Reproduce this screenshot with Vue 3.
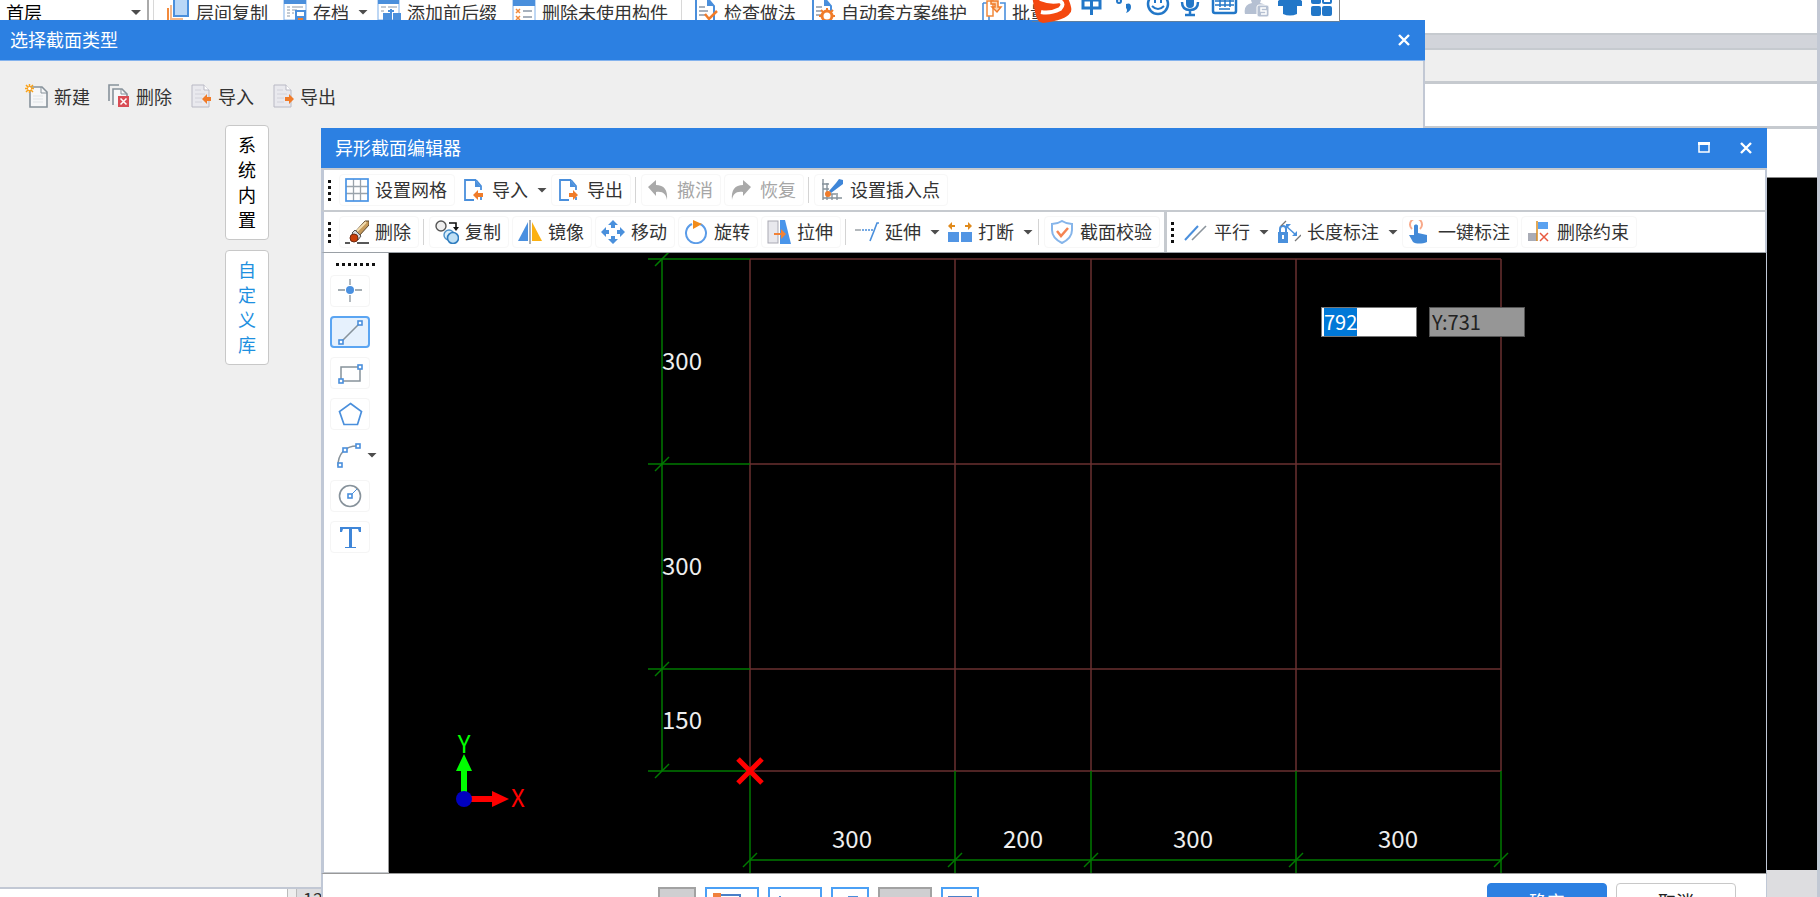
<script setup>
import { onMounted, ref } from 'vue'

const doc = (accent) =>
  `<path d="M3 1h12l5 5v17H3z" fill="#e9e9ee" stroke="#b9b9c4"/><path d="M15 1v5h5" fill="#fff" stroke="#b9b9c4"/><path d="M6 6h6M6 10h10M6 14h7M6 18h7" stroke="#d2d2da"/>${accent}`
const sheet = (accent) =>
  `<path d="M14 2H3v20h9M14 2l5 6v4M19 19v3" fill="none" stroke="#4a8fdc" stroke-width="1.800"/><path d="M13 2v7h6z" fill="#4a8fdc"/>${accent}`
const node = (x, y) => `<rect x="${x - 2}" y="${y - 2}" width="4" height="4" fill="#fff" stroke="#4a8fdc" stroke-width="1.6"/>`

const icons = {
  layers: '<path d="M2 8v14h13" fill="none" stroke="#f28a3c" stroke-width="2"/><path d="M5 5v14h12" fill="none" stroke="#f6b98a" stroke-width="2"/><rect x="8" y="-2" width="14" height="18" fill="#b9d7f7" stroke="#4a8fdc" stroke-width="2"/>',
  archive: '<rect x="1" y="-2" width="22" height="22" fill="#fff" stroke="#7fb0ea"/><rect x="1" y="-2" width="22" height="6" fill="#4a8fdc"/><path d="M4 7h3M9 7h11M4 10h3M9 10h5M4 13h3M9 13h2M4 16h3" stroke="#8a98a8"/><path d="M12 10h11v12H12z" fill="#4a8fdc"/><path d="M14 12h7v4h-7z" fill="#fff"/><path d="M15 18h5v4h-5z" fill="#f07c2a"/>',
  affix: '<rect x="1" y="-2" width="21" height="22" fill="#fff" stroke="#7fb0ea"/><rect x="1" y="-2" width="21" height="6" fill="#4a8fdc"/><path d="M4 7h5M11 7h9M4 11h3" stroke="#8a98a8"/><path d="M6 13h7v9H6zM16 13h8v9h-8z" fill="#4a8fdc"/><path d="M14 9v12M11 11h6" stroke="#4a8fdc" stroke-width="2"/>',
  unused: '<rect x="1" y="-2" width="22" height="25" fill="#fff" stroke="#7fb0ea"/><rect x="1" y="-2" width="22" height="8" fill="#4a8fdc"/><path d="M4 9l4 4m0-4l-4 4M4 16l4 4m0-4l-4 4" stroke="#f28a3c" stroke-width="1.5"/><path d="M11 11h9M11 17h9" stroke="#8a98a8" stroke-width="1.5"/>',
  check: '<path d="M2-1h12l6 7v16H2z" fill="#fff" stroke="#4a8fdc" stroke-width="2"/><path d="M13-1v7h7z" fill="#4a8fdc"/><path d="M5 7h6M5 11h9M5 15h7" stroke="#8a98a8" stroke-width="1.5"/><path d="M11 14l4 5 8-8" fill="none" stroke="#f07c2a" stroke-width="2.5"/>',
  scheme: '<path d="M2-1h12l6 7v16H2z" fill="#fff" stroke="#4a8fdc" stroke-width="2"/><path d="M13-1v7h7z" fill="#4a8fdc"/><path d="M5 7h6M5 11h5M5 15h5" stroke="#8a98a8" stroke-width="1.5"/><circle cx="16" cy="16" r="5" fill="#fff" stroke="#f07c2a" stroke-width="3"/><path d="M16 8v3M8 16h3M21 16h3M10 10l3 3M22 10l-3 3" stroke="#f07c2a" stroke-width="2"/>',
  batch: '<path d="M1 3h6v18M1 3v19h22V3h-5" fill="none" stroke="#4a8fdc" stroke-width="1.6"/><path d="M5 1h6v15H5z" fill="#fff" stroke="#f28a3c" stroke-width="1.5"/><path d="M9 1h7v6h3l-4 5-5-5h3V4H9z" fill="#fcd3ae" stroke="#f07c2a" stroke-width="1.5"/>',
  create: '<path d="M5 3h12l5 5v15H5z" fill="#f6f7f8" stroke="#87929b" stroke-width="1.6"/><path d="M16 3v6h6" fill="none" stroke="#87929b"/><path d="M8 12h10M8 15h10M8 18h10" stroke="#dfe3e6"/><path d="M1 1l7 7M8 1L1 8M4.5 0v9M0 4.500h9" stroke="#f9a21b" stroke-width="1.500"/><circle cx="4.500" cy="4.500" r="1.500" fill="#fff"/>',
  dialogDelete: '<path d="M2 17V1h10" fill="none" stroke="#87929b" stroke-width="1.600"/><path d="M6 21V5h9l5 5v6" fill="#f6f7f8" stroke="#87929b" stroke-width="1.600"/><path d="M14 5v5h6" fill="none" stroke="#87929b"/><rect x="11" y="12" width="11" height="11" fill="#d94d55"/><path d="M13.500 14.500l6 6m0-6l-6 6" stroke="#fff" stroke-width="1.500"/>',
  dialogImport: doc('<path d="M13 15l5-5v3h4v4h-4v3z" fill="#f07c2a"/>'),
  dialogExport: doc('<path d="M23 15l-5-5v3h-4v4h4v3z" fill="#f07c2a"/>'),
  grid: '<rect x="1" y="1" width="22" height="22" fill="#fff"/><path d="M8.500 1v22M15.500 1v22M1 8.500h22M1 15.500h22" stroke="#9aa3ab" stroke-width="1.300"/><rect x="1" y="1" width="22" height="22" fill="none" stroke="#4a95e6" stroke-width="1.700"/>',
  import: sheet('<path d="M11 17l5-5v3h5v4h-5v3z" fill="#f07c2a"/>'),
  export: sheet('<path d="M21 17l-5-5v3h-4v4h4v3z" fill="#f07c2a"/>'),
  undo: '<path d="M1 9l8-7v5c8 0 12 5 11 15-1-6-4-9-11-8v4z" fill="#a9a9a9"/>',
  redo: '<path d="M21 9l-8-7v5C5 7 1 12 2 22c1-6 4-9 11-8v4z" fill="#a9a9a9"/>',
  insertion: '<path d="M3 1v21M7 5v17M12 16v6M17 17v5M2 6h7M3 11h6M8 16h10M3 20h19" stroke="#87929b" stroke-width="1.400"/><path d="M9 13l7-8 3-4 4 1v4l-4 3-8 6z" fill="#3f86d8"/><circle cx="8" cy="16" r="3" fill="#f07c2a"/>',
  eraser: '<path d="M10 12L20 1h4v4L14 16z" fill="#c69a5b" stroke="#59452d"/><path d="M12 11l9-9" stroke="#f2dcae" stroke-width="2"/><path d="M7 13l3-3 6 6-3 4z" fill="#d4d8dc" stroke="#555"/><circle cx="9" cy="18" r="4" fill="#c83e08" stroke="#6d2b12"/><path d="M0 23h5M12 23h12" stroke="#222" stroke-width="1.500"/>',
  copy: '<circle cx="6" cy="6" r="5" fill="#eee" stroke="#555" stroke-width="1.400"/><path d="M14 3h7v5" fill="none" stroke="#111" stroke-width="1.600"/><path d="M18 7h6l-3 4z" fill="#111"/><circle cx="14" cy="15" r="5" fill="#d8eefb" stroke="#4d92c9" stroke-width="1.400"/><circle cx="18" cy="18" r="5.500" fill="#bfe0f5" stroke="#2f7dbf" stroke-width="1.600"/>',
  mirror: '<path d="M10 2v19H0z" fill="#4a90e0"/><path d="M14 2v19h10z" fill="#fcb112"/><path d="M12 0v24" stroke="#8e9399" stroke-width="1.500"/>',
  move: '<path d="M12 0l5 5h-3v3h-4V5H7zM12 24l-5-5h3v-3h4v3h3zM0 12l5-5v3h3v4H5v3zM24 12l-5 5v-3h-3v-4h3V7z" fill="#4a90dc"/>',
  rotate: '<path d="M8 4a10 10 0 1 0 8 0" fill="none" stroke="#5b9ce8" stroke-width="2"/><path d="M9 0l9 4-9 5z" fill="#f28c1b"/>',
  stretch: '<rect x="1" y="1" width="10" height="22" fill="#e8e8ed" stroke="#a9a9b3"/><path d="M13 0h5l6 24H13z" fill="#4a95ea"/><path d="M7 13h7V9l5 5-5 5v-4H7z" fill="#f28236"/>',
  extend: '<path d="M0 10h6" stroke="#9aa0a6" stroke-width="1.500"/><path d="M7 10h11" stroke="#4a8fdc" stroke-width="1.500" stroke-dasharray="2 1"/><path d="M24 3h-2l-3 8-4 10" fill="none" stroke="#4a8fdc" stroke-width="1.600"/>',
  break: '<path d="M0 12h11v10H0zM13 12h11v10H13z" fill="#5195e4"/><path d="M0 6l4-4v3h3v2H4v3zM24 6l-4-4v3h-3v2h3v3z" fill="#e08a1c"/>',
  verify: '<path d="M12 1c3 2 6 3 10 3v6c0 6-4 10-10 13C6 20 2 16 2 10V4c4 0 7-1 10-3z" fill="#fff" stroke="#86b5ea" stroke-width="2"/><path d="M7 11l4 5 7-8" fill="none" stroke="#f58452" stroke-width="2.500"/>',
  parallel: '<path d="M1 20L14 6" stroke="#4a8fdc" stroke-width="2"/><path d="M8 20L22 6" stroke="#8b949c" stroke-width="1.600"/>',
  length: '<rect x="1" y="12" width="10" height="11" fill="#4a90dc"/><path d="M3 12V9a3 3 0 0 1 6 0v3" fill="none" stroke="#4a90dc" stroke-width="2"/><path d="M6 15v4" stroke="#fff" stroke-width="2"/><path d="M4 6l5-5M18 21l6-6" stroke="#777" stroke-width="1.300"/><path d="M9 6l10 9" stroke="#4a90dc" stroke-width="1.500"/><path d="M9 4h5l-5 5zM20 16v-5l-5 5z" fill="#4a90dc"/>',
  touch: '<path d="M4 9a6 6 0 1 1 8 0" fill="none" stroke="#f8a98a" stroke-width="2"/><path d="M6 6c0-2 4-2 4 0v7l9 2v7c-5 2-11 2-14 0l-4-7h5z" fill="#438ad8"/>',
  unconstrain: '<path d="M11 2h10v7H11z" fill="#5ba2f0"/><path d="M1 13h9v8H1z" fill="#a9acb6"/><path d="M10 1v20" stroke="#d98c1f" stroke-width="1.500"/><path d="M13 13l8 8m0-8l-8 8" stroke="#e8593f" stroke-width="1.500"/>',
  point: '<path d="M12 0v6M12 16v7M0 11h7M17 11h7" stroke="#87929b" stroke-width="1.300"/><circle cx="12" cy="11" r="4" fill="#4a90e0"/>',
  line: '<path d="M4 21L22 3" stroke="#87929b" stroke-width="1.600"/>' + node(3, 22) + node(22, 3),
  rect: '<rect x="3" y="6" width="19" height="14" fill="none" stroke="#87929b" stroke-width="1.500"/>' + node(3, 20) + node(22, 6),
  pentagon: '<path d="M12.500 1.500l11 8-4 13h-13.500l-4.500-13z" fill="none" stroke="#4a8fdc" stroke-width="1.700"/>',
  arc: '<path d="M1 23C1 11 8 3 20 3" fill="none" stroke="#87929b" stroke-width="1.500"/>' + node(3, 22) + node(8, 7) + node(21, 3),
  circle: '<circle cx="12" cy="12" r="10.500" fill="none" stroke="#87929b" stroke-width="1.600"/><path d="M12 12l7-7" stroke="#4a90dc"/>' + node(12, 12),
  textTool: '<path d="M2 2h21v5h-2l-1-3h-6v18h4v1H7v-1h4V4H5L4 7H2z" fill="#3f86d8"/>',
}

const mainTools = [
  { icon: 'layers', label: '层间复制' },
  { icon: 'archive', label: '存档', menu: true },
  { icon: 'affix', label: '添加前后缀' },
  { icon: 'unused', label: '删除未使用构件' },
  { sep: true },
  { icon: 'check', label: '检查做法' },
  { icon: 'scheme', label: '自动套方案维护' },
  { icon: 'batch', label: '批量' },
]
const sectionTools = [
  { icon: 'create', label: '新建' },
  { icon: 'dialogDelete', label: '删除' },
  { icon: 'dialogImport', label: '导入' },
  { icon: 'dialogExport', label: '导出' },
]
const rows = [
  [[
    { icon: 'grid', label: '设置网格' },
    { icon: 'import', label: '导入', menu: true },
    { icon: 'export', label: '导出' },
    { sep: true },
    { icon: 'undo', label: '撤消', off: true },
    { icon: 'redo', label: '恢复', off: true },
    { sep: true },
    { icon: 'insertion', label: '设置插入点' },
  ]],
  [[
    { icon: 'eraser', label: '删除' },
    { sep: true },
    { icon: 'copy', label: '复制' },
    { icon: 'mirror', label: '镜像' },
    { icon: 'move', label: '移动' },
    { icon: 'rotate', label: '旋转' },
    { icon: 'stretch', label: '拉伸' },
    { sep: true },
    { icon: 'extend', label: '延伸', menu: true },
    { icon: 'break', label: '打断', menu: true },
    { sep: true },
    { icon: 'verify', label: '截面校验' },
  ], [
    { icon: 'parallel', label: '平行', menu: true },
    { icon: 'length', label: '长度标注', menu: true },
    { icon: 'touch', label: '一键标注' },
    { icon: 'unconstrain', label: '删除约束' },
  ]],
]
const palette = [
  { icon: 'point', label: '点' },
  { icon: 'line', label: '直线' },
  { icon: 'rect', label: '矩形' },
  { icon: 'pentagon', label: '多边形' },
  { icon: 'arc', label: '弧线', menu: true },
  { icon: 'circle', label: '圆' },
  { icon: 'textTool', label: '文字' },
]
const active = ref('line')

const xs = [361, 566, 702, 907, 1112]
const ys = [6, 211, 416, 518]
const xDims = [
  { at: 463, value: 300 },
  { at: 634, value: 200 },
  { at: 804, value: 300 },
  { at: 1009, value: 300 },
]
const yDims = [
  { at: 117, value: 300 },
  { at: 322, value: 300 },
  { at: 476, value: 150 },
]

const xField = ref('792')
const yField = ref('Y:731')
const xInput = ref(null)
onMounted(() => {
  xInput.value.focus()
  xInput.value.select()
})
</script>

<template>
  <div class="desktop">
    <main class="app">
      <header class="app-tools">
        <label class="floor">
          <select aria-label="楼层"><option>首层</option></select>
          <i class="caret"></i>
        </label>
        <i class="app-sep first"></i>
        <template v-for="(t, i) in mainTools" :key="i">
          <i v-if="t.sep" class="app-sep"></i>
          <button v-else class="app-tool" type="button">
            <svg width="24" height="24" v-html="icons[t.icon]"></svg>
            <span>{{ t.label }}</span>
            <i v-if="t.menu" class="caret"></i>
          </button>
        </template>
      </header>
      <div class="strip mid"></div>
      <div class="strip pale"></div>
      <div class="strip blank"></div>
      <div class="strip blank tall"></div>
      <div class="model"></div>
      <footer class="app-status">
        <div class="status-list"></div>
        <i class="status-split"></i>
        <span>12</span>
      </footer>
    </main>

    <section class="window section-window">
      <header class="titlebar">
        <h1>选择截面类型</h1>
        <button type="button" aria-label="关闭">
          <svg width="12" height="12"><path d="M1 1l10 10M11 1L1 11" stroke="#fff" stroke-width="2.400" /></svg>
        </button>
      </header>
      <div class="section-tools">
        <button v-for="t in sectionTools" :key="t.icon" type="button">
          <svg width="24" height="24" v-html="icons[t.icon]"></svg>
          <span>{{ t.label }}</span>
        </button>
      </div>
      <nav class="library">
        <button type="button">系统内置</button>
        <button type="button" class="current">自定义库</button>
      </nav>
    </section>

    <section class="window editor">
      <header class="titlebar">
        <h1>异形截面编辑器</h1>
        <button type="button" aria-label="最大化">
          <svg width="12" height="12"><path d="M1 1v9h10V1" fill="none" stroke="#fff" stroke-width="1.500" /><path d="M0 1.500h12" stroke="#fff" stroke-width="3" /></svg>
        </button>
        <button type="button" aria-label="关闭">
          <svg width="12" height="12"><path d="M1 1l10 10M11 1L1 11" stroke="#fff" stroke-width="2.400" /></svg>
        </button>
      </header>

      <div v-for="(row, r) in rows" :key="r" class="tool-row">
        <div v-for="(group, g) in row" :key="g" class="tool-group">
          <i class="grip"></i>
          <template v-for="(t, i) in group" :key="i">
            <i v-if="t.sep" class="sep"></i>
            <button v-else type="button" class="tool" :class="{ menu: t.menu }" :disabled="t.off">
              <svg width="24" height="24" v-html="icons[t.icon]"></svg>
              <span>{{ t.label }}</span>
              <i v-if="t.menu" class="caret"></i>
            </button>
          </template>
        </div>
      </div>

      <div class="work">
        <aside class="palette">
          <i class="grip flat"></i>
          <button
            v-for="p in palette"
            :key="p.icon"
            type="button"
            :aria-label="p.label"
            :class="{ active: active === p.icon, menu: p.menu }"
            @click="active = p.icon"
          >
            <svg width="25" height="25" v-html="icons[p.icon]"></svg>
            <i v-if="p.menu" class="caret"></i>
          </button>
        </aside>
        <div class="canvas">
          <svg class="drawing" width="100%" height="100%">
            <g stroke="#6a3030" stroke-width="1.500">
              <line v-for="x in xs" :key="'x' + x" :x1="x" :x2="x" y1="6" y2="518" />
              <line v-for="y in ys" :key="'y' + y" x1="361" x2="1112" :y1="y" :y2="y" />
            </g>
            <g stroke="#007a00" stroke-width="1.500">
              <line x1="273" x2="273" y1="6" y2="518" />
              <line v-for="y in ys" :key="'e' + y" x1="259" x2="361" :y1="y" :y2="y" />
              <line v-for="y in ys" :key="'t' + y" x1="266" x2="280" :y1="y + 7" :y2="y - 7" />
              <line x1="361" x2="1112" y1="607" y2="607" />
              <line v-for="x in xs" :key="'e' + x" :x1="x" :x2="x" y1="518" y2="621" />
              <line v-for="x in xs" :key="'t' + x" :x1="x - 7" :x2="x + 7" y1="614" y2="600" />
            </g>
            <g class="dims">
              <text v-for="d in yDims" :key="d.at" x="273" :y="d.at">{{ d.value }}</text>
              <text v-for="d in xDims" :key="d.at" class="centered" :x="d.at" y="595">{{ d.value }}</text>
            </g>
            <path d="M349 506l24 24M373 506l-24 24" stroke="#f00" stroke-width="5" />
            <path d="M72 540V518h-5l8-17 8 17h-5v22z" fill="#0f0" />
            <path d="M82 543h21v-5l17 8-17 8v-5H82z" fill="#f00" />
            <circle cx="75" cy="546" r="8" fill="#0000c0" />
            <text class="axis y" x="75" y="500">Y</text>
            <text class="axis x" x="129" y="554">X</text>
          </svg>
          <div class="coords">
            <input ref="xInput" v-model="xField" type="text" aria-label="X" />
            <input v-model="yField" type="text" aria-label="Y" class="idle" />
          </div>
        </div>
      </div>

      <footer class="editor-foot">
        <div class="modes">
          <button type="button" class="grey" aria-label="光标"><svg width="24" height="24"><path d="M6 8v12l4-4h7z" fill="#555" /></svg></button>
          <button type="button" class="wide" aria-label="对象捕捉"><svg width="40" height="24"><path d="M9 6h19v14" fill="none" stroke="#4a80c8" stroke-width="2" /><path d="M1 4h8v8H1z" fill="#f0803c" /></svg></button>
          <button type="button" class="wide" aria-label="垂点"><svg width="40" height="24"><path d="M5 7v15h22" fill="none" stroke="#4a8fdc" stroke-width="2" /></svg></button>
          <button type="button" aria-label="正交"><svg width="24" height="24"><path d="M10 7h10v8H10zM4 9h6v2H4z" fill="#4a8fdc" /></svg></button>
          <button type="button" class="wide grey" aria-label="锁定"></button>
          <button type="button" aria-label="动态输入"><svg width="24" height="24"><path d="M0 8h24" stroke="#4a80c8" stroke-width="2" /></svg></button>
        </div>
        <div class="decide">
          <button type="button" class="primary">确定</button>
          <button type="button">取消</button>
        </div>
      </footer>
    </section>

    <div class="ime">
      <svg width="310" height="24" viewBox="0 0 310 24">
        <path d="M0-4L34-6Q42 10 38 13 34 20 11 23 5 23 3 12z" fill="#f4480f" />
        <path d="M8-1Q18 3 28 1 33 4 28 9 18 14 9 12" fill="none" stroke="#fff" stroke-width="4" />
        <g fill="none" stroke="#2277c8" stroke-width="3">
          <path d="M51 0h17v8H51zM59.500-6v21" />
          <circle cx="87" cy="1" r="2" stroke-width="2" />
          <circle cx="92" cy="-9" r="2" />
          <circle cx="126" cy="4" r="10" stroke-width="2.500" />
          <path d="M120 6q6 6 12 0M123-1v4M129-1v4" stroke-width="2" />
          <path d="M150 2q0 8 8 8t8-8M158 11v3M153 15h10" stroke-width="2.500" />
          <rect x="181" y="-4" width="23" height="17" rx="2" stroke-width="2.500" />
          <path d="M183 1h19M183 5h19M187 9h11M188-2v9M193-2v9M198-2v9" stroke-width="1.500" />
        </g>
        <rect x="154" y="-6" width="8" height="14" rx="4" fill="#2277c8" />
        <path d="M94 4q5-2 5 3 0 4-5 6 2-3 0-5z" fill="#2277c8" />
        <path d="M213 14Q211 5 220 3q-4-10 4-10t4 10q6 1 7 5v6z" fill="#b5c0d2" />
        <rect x="225" y="5" width="12" height="12" rx="2" fill="#b5c0d2" stroke="#fff" />
        <path d="M234 8h-5v3h5v3h-5" fill="none" stroke="#fff" stroke-width="1.500" />
        <path d="M246 1q5-4 12-4t12 4v5h-5v8q-7 3-14 0V6h-5z" fill="#2277c8" />
        <g fill="#2277c8"><rect x="279" y="-6" width="10" height="10" rx="2" /><rect x="279" y="6" width="10" height="10" rx="2" /><rect x="290" y="6" width="10" height="10" rx="2" /></g>
        <rect x="291" y="-5" width="8" height="8" rx="1" fill="#fff" stroke="#2277c8" stroke-width="2" />
      </svg>
    </div>
  </div>
</template>

<style>
html, body { margin: 0; overflow: hidden; }
</style>

<style scoped>
.desktop { position: relative; height: 100vh; overflow: hidden; color: #333; font: 18px/24px "Noto Sans CJK SC", "Noto Sans", sans-serif; }
.desktop * { box-sizing: border-box; }
button { display: flex; align-items: center; padding: 0; border: 0; background: none; color: inherit; font: inherit; white-space: nowrap; }
svg { flex: none; display: block; }
.caret { flex: none; width: 10px; height: 5px; background: #4d4d4d; clip-path: polygon(0 0, 100% 0, 50% 100%); }

.app { display: flex; flex-direction: column; height: 100%; border-right: 3px solid #c2c8d4; background: #fff; }
.app-tools { display: flex; align-items: flex-start; height: 33px; }
.floor { position: relative; width: 149px; height: 24px; border-right: 2px solid #aaa; }
.floor select { width: 100%; height: 24px; padding: 0 6px; border: 0; appearance: none; background: #fff; color: #000; font: inherit; }
.floor .caret { position: absolute; top: 10px; right: 6px; }
.app-sep { width: 1px; height: 24px; margin: 0 12px 0 -2px; background: #d8d8d8; }
.app-sep.first { margin: 0 12px 0 4px; }
.app-tool { height: 24px; gap: 6px; margin-right: 15px; }
.app-tool .caret { margin-left: 3px; }
.app-tool:has(.caret) { margin-right: 9px; }
.strip { flex: none; height: 45px; border-top: 3px solid #c6cacf; }
.strip.mid { height: 15px; background: #d2d4da; border-top-width: 2px; }
.strip.pale { height: 33px; background: #efefef; border-top-width: 2px; }
.strip.tall { height: 52px; border-bottom: 1px solid #888; }
.model { flex: 1; background: #000; }
.app-status { display: flex; flex: none; height: 27px; padding-top: 18px; background: #dddde0; }
.status-list { width: 288px; background: #fff; border-right: 1px solid #bbb; }
.status-split { width: 9px; border-right: 1px solid #bbb; background: #eee; }
.app-status span { padding-left: 6px; line-height: 20px; }

.window { position: absolute; display: flex; flex-direction: column; }
.titlebar { display: flex; flex: none; align-items: center; height: 40px; padding: 0 14px; background: #2c80e2; color: #fff; }
.titlebar h1 { flex: 1; margin: 0; padding-bottom: 2px; font-size: 18px; font-weight: 400; }
.titlebar button { justify-content: center; width: 14px; height: 24px; margin-left: 28px; }

.section-window { top: 20px; right: 395px; bottom: 8px; left: 0; background: #efefef; border-bottom: 2px solid #c2c8d4; }
.section-window::after { content: ""; position: absolute; top: 41px; right: 0; bottom: 0; width: 2px; background: #c2c8d4; }
.section-window .titlebar { padding-left: 10px; }
.section-tools { display: flex; height: 65px; gap: 17px; padding: 23px 24px 0; border-top: 1px solid #84b3ee; }
.section-tools button { height: 24px; gap: 5px; margin-left: 1px; }
.section-tools button + button { margin-left: 0; }
.library { display: flex; flex-direction: column; align-items: flex-start; gap: 10px; padding-left: 225px; }
.library button { justify-content: center; width: 44px; height: 115px; border: 1px solid #c8c8c8; border-radius: 4px; background: #fff; color: #000; line-height: 25px; white-space: normal; padding: 0 12px 2px; }
.library .current { color: #1e90e0; }

.editor { top: 128px; right: 53px; bottom: -36px; left: 321px; background: #fff; }
.tool-row { display: flex; flex: none; height: 42px; border-top: 2px solid #c6cacf; border-left: 3px solid #c0c8d6; border-right: 2px solid #c0c8d6; }
.tool-group { display: flex; align-items: center; }
.tool-group + .tool-group { margin-left: 1px; border-left: 3px solid #c6cacf; }
.tool-group + .tool-group .grip { margin-right: 6px; }
.grip { flex: none; width: 3px; height: 21px; margin: 0 8px 0 4px; background: repeating-linear-gradient(#111 0 3px, transparent 3px 6px); }
.grip.flat { width: 39px; height: 3px; margin: 10px 0 0 12px; background: repeating-linear-gradient(90deg, #111 0 3px, transparent 3px 6px); }
.tool { height: 32px; gap: 6px; margin-right: 3px; padding: 0 7px 0 5px; border: 1px solid #f7f7f7; border-radius: 4px; }
.tool span { padding-bottom: 2px; }
.tool.menu { margin-right: 0; padding: 0 3px; border-color: transparent; }
.tool .caret { margin-left: 3px; }
.tool:disabled { color: #a6a6a6; }
.sep { width: 1px; height: 26px; margin: 0 5px 0 1px; background: #d4d4d4; }

.work { display: flex; flex: 1; min-height: 0; border-top: 1px solid #9aa0a6; border-right: 1px solid #c0c8d6; border-left: 3px solid #c0c8d6; }
.palette { display: flex; flex: none; flex-direction: column; gap: 9px; width: 65px; border-right: 1px solid #999; border-bottom: 1px solid #c6cacf; }
.palette button { justify-content: center; width: 40px; height: 32px; margin-left: 6px; border: 1px solid #f5f5f5; border-radius: 4px; }
.palette button.active { border: 2px solid #5ba5f2; background: #e6f1fd; }
.palette button.menu { width: 54px; gap: 5px; padding: 0; border-color: transparent; }
.canvas { position: relative; flex: 1; min-width: 0; overflow: hidden; background: #000; }
.drawing { position: absolute; inset: 0; }
.dims { fill: #eee; font-size: 24px; }
.centered, .axis { text-anchor: middle; }
.axis { font: 24px "Noto Sans CJK SC", sans-serif; }
.axis.y { fill: #0f0; }
.axis.x { fill: #f00; }
.coords { position: absolute; top: 54px; left: 932px; display: flex; gap: 12px; }
.coords input { width: 96px; height: 30px; padding: 0 2px 2px; border: 1px solid #777; border-radius: 0; outline: 0; background: #fff; color: #222; font: 20px/26px "Noto Sans CJK SC", sans-serif; }
.coords input::selection { background: #0078d7; color: #fff; }
.coords .idle { background: #969696; border-color: #555; }

.editor-foot { display: flex; flex: none; justify-content: space-between; height: 60px; padding: 9px 30px 9px 335px; border-top: 1px solid #999; border-left: 2px solid #c0c8d6; border-right: 1px solid #c0c8d6; }
.modes { display: flex; gap: 9px; padding-top: 4px; }
.modes button { align-items: flex-start; justify-content: center; width: 38px; height: 30px; border: 2px solid #4ba0f5; background: #fff; }
.modes .wide { width: 54px; }
.modes .grey { border-color: #a2a2a2; background: #cfcfd1; }
.decide { display: flex; gap: 9px; }
.decide button { justify-content: center; width: 120px; height: 36px; border: 1px solid #c8c8c8; border-radius: 4px; background: #fff; color: #222; }
.decide .primary { border-color: #2c80e2; background: #2c80e2; color: #fff; }

.ime { position: absolute; top: 0; left: 1032px; width: 308px; height: 22px; background: linear-gradient(90deg, transparent 20px, #fff 20px); border-right: 1px solid #888; border-bottom: 1px solid #5f7f9f; }
</style>
